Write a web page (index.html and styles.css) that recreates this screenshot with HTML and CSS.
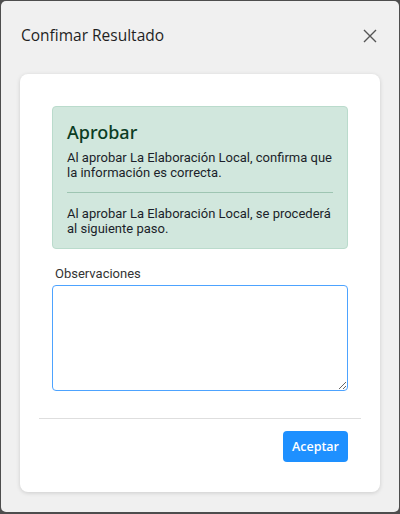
FILE: index.html
```html
<!DOCTYPE html>
<html lang="es">
<head>
    <meta charset="UTF-8">
    <meta name="viewport" content="width=device-width, initial-scale=1.0">
    <title>Confirmar Resultado</title>
    <link rel="stylesheet" href="styles.css">
</head>
<body>

<div class="dialog">
    <div class="dialog-header">
        <h2>Confimar Resultado</h2>
        <button class="close-button" aria-label="Cerrar">
            <svg width="14" height="14" viewBox="0 0 14 14">
                <path d="M1 1 L13 13 M13 1 L1 13" stroke="#555" stroke-width="1.4" fill="none"/>
            </svg>
        </button>
    </div>

    <div class="dialog-card">
        <div class="card-body">
            <div class="alert-success">
                <h3>Aprobar</h3>
                <p>Al aprobar La Elaboración Local, confirma que la información es correcta.</p>
                <hr>
                <p>Al aprobar La Elaboración Local, se procederá al siguiente paso.</p>
            </div>

            <label for="observaciones">Observaciones</label>
            <textarea id="observaciones" name="observaciones"></textarea>
        </div>

        <div class="card-footer">
            <button class="accept-button">Aceptar</button>
        </div>
    </div>
</div>

</body>
</html>
```

FILE: styles.css
```css
body {
    margin: 0;
    background: #4d4d4d;
    font-family: Roboto, Arial, sans-serif;
}

.dialog {
    margin: 1px 1px 2px 1px;
    height: 511px;
    box-sizing: border-box;
    background: #f0f0f0;
    border-radius: 5px;
    padding-top: 22px;
}

.dialog-header {
    display: flex;
    justify-content: space-between;
    align-items: center;
    padding: 0 20px 0 20px;
    height: 24px;
}

.dialog-header h2 {
    margin: 0;
    font-family: "Open Sans", "Noto Sans", sans-serif;
    font-size: 15.5px;
    font-weight: 400;
    color: #1f1f1f;
    line-height: 24px;
}

.close-button {
    border: none;
    background: none;
    padding: 0;
    width: 14px;
    height: 14px;
    margin-right: 2px;
    margin-top: 2px;
    display: flex;
}

.dialog-card {
    margin: 27px 19px 0 19px;
    height: 418px;
    box-sizing: border-box;
    background: #fff;
    border-radius: 8px;
    box-shadow: 0 1px 4px rgba(0, 0, 0, 0.15);
    padding-top: 32px;
}

.card-body {
    padding: 0 32px;
}

.alert-success {
    background: #d1e7dd;
    border: 1px solid #badbcc;
    border-radius: 4px;
    padding: 13px 14px 12px 14px;
}

.alert-success h3 {
    margin: 0 0 6px 0;
    font-family: "Noto Sans", "Open Sans", sans-serif;
    font-size: 18px;
    font-weight: 500;
    line-height: 24px;
    color: #0b3d24;
}

.alert-success p {
    margin: 0;
    font-size: 13px;
    line-height: 15px;
    color: #1b1f2a;
}

.alert-success hr {
    border: none;
    border-top: 1px solid #9ec5b2;
    margin: 12px 0 13px 0;
}

label {
    display: block;
    margin-top: 17px;
    padding-left: 3px;
    font-size: 13px;
    line-height: 15px;
    color: #333;
    margin-bottom: 4px;
}

textarea {
    display: block;
    width: 100%;
    height: 106px;
    box-sizing: border-box;
    border: 1px solid #4da3ff;
    border-radius: 4px;
    outline: none;
    font-family: Roboto, Arial, sans-serif;
    font-size: 13px;
}

.card-footer {
    margin: 27px 19px 0 19px;
    border-top: 1px solid #dedede;
    padding: 12px 13px 0 0;
    display: flex;
    justify-content: flex-end;
}

.accept-button {
    width: 65px;
    height: 31px;
    border: none;
    border-radius: 4px;
    background: #1e90ff;
    color: #fff;
    font-family: "Open Sans", "Noto Sans", sans-serif;
    font-size: 12.5px;
    font-weight: 600;
    padding: 0;
}
```
